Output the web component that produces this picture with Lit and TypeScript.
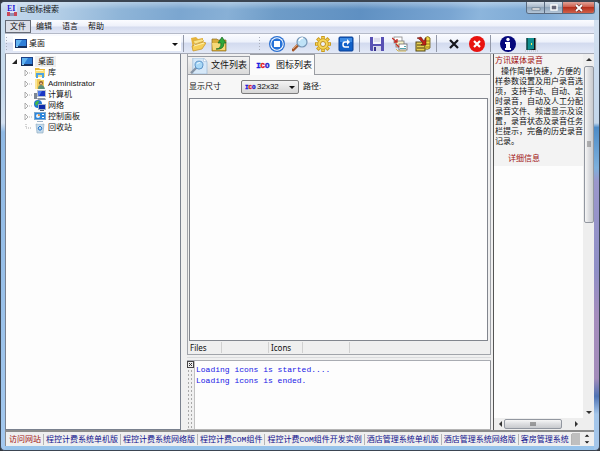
import { LitElement, html, svg, css, TemplateResult } from "lit";
import { customElement, state } from "lit/decorators.js";
import { classMap } from "lit/directives/class-map.js";

const icon = (box: string, cls: string, body: unknown): TemplateResult =>
  html`<svg class=${cls} viewBox=${box} aria-hidden="true">${body}</svg>`;

const desktopArt = svg`
  <rect x="0" y="1" width="12" height="9" fill="#1c3f86"/>
  <rect x="1" y="2" width="10" height="6" fill="#2f7fd8"/>
  <path d="M1 2h6L3 8H1z" fill="#63b4f0"/>
  <rect x="0" y="8" width="12" height="2" fill="#16305e"/>
  <rect x="1" y="8" width="2" height="1" fill="#8fd0f5"/>`;

const treeArt = {
  library: svg`<path d="M1 1h4l1 1h5v3H1z" fill="#e5b73c"/><rect x="1" y="3" width="10" height="7" fill="#f8df7a"/>
    <path d="M2 6h8v5H8V8H4v3H2z" fill="#4ea3e0"/><path d="M2 3h7v1H2z" fill="#fff7cf"/>`,
  user: svg`<path d="M1 1h5l1 1h3v9H1z" fill="#f1cc59"/><path d="M1 1h2v10H1z" fill="#fbe69a"/>
    <circle cx="7" cy="5" r="2" fill="#8a5a2c"/><path d="M4 11q0-4 3-4t4 4z" fill="#5f8f7a"/><circle cx="7" cy="5.500" r="1" fill="#f2c9a0"/>`,
  computer: svg`<rect x="3" y="1" width="9" height="7" fill="#b8c0cc"/><rect x="4" y="2" width="7" height="5" fill="#1a37c4"/>
    <path d="M4 2h4L5 7H4z" fill="#4c78ea"/><rect x="0" y="4" width="3" height="6" fill="#7d8794"/><path d="M3 9h8l1 2H4z" fill="#8d96a3"/>`,
  network: svg`<circle cx="4" cy="4" r="4" fill="#1f74d2"/><path d="M1 3q2-3 4-2l-1 3-2 2z" fill="#43b649"/>
    <rect x="4" y="4" width="8" height="6" fill="#9fb0c6"/><rect x="5" y="5" width="6" height="4" fill="#0d2aaa"/><path d="M6 10h4v1H6z" fill="#53606f"/>`,
  control: svg`<rect x="0" y="1" width="12" height="8" fill="#7fa9cf"/><rect x="1" y="2" width="10" height="6" fill="#2c86dc"/>
    <circle cx="4" cy="5" r="2" fill="#e8f3fb"/><path d="M4 5V3a2 2 0 0 1 2 2z" fill="#e9923a"/><path d="M8 3h2v1H8zM8 6h2v1H8z" fill="#fff"/><path d="M3 10h6v1H3z" fill="#9cb3c7"/>`,
  bin: svg`<path d="M2 2h8L9 11H3z" fill="#c3d9ea" stroke="#8aa7be" stroke-width=".6"/>
    <path d="M2 2l2-1h4l2 1z" fill="#eef5fa"/><path d="M4 6l2-2 2 2-1 2H5z" fill="none" stroke="#2779d0"/>`,
};

const toolArt = {
  open: svg`<path d="M1 2l5-1 2 2 5-1v4L4 8l-1 5z" fill="#e5b33c"/><path d="M3 5l9-2 2 2-9 3z" fill="#fbe48a" stroke="#cf9f2c" stroke-width=".5"/>
    <path d="M2 10l11-4 3 1-4 6-9 2z" fill="#f6cf57" stroke="#c48f20" stroke-width=".7"/><path d="M4 10l10-3" stroke="#fff1b0"/>`,
  up: svg`<path d="M1 3h5l1 1h8v11H1z" fill="#d9ae3b" stroke="#8d6d1c" stroke-width=".7"/><path d="M1 7h13v7H2z" fill="#f5d978"/>
    <path d="M5 13q5 0 5-6H7l4-6 4 6h-2q0 7-8 6z" fill="#2fa83a" stroke="#17651f" stroke-width=".7"/>`,
  stop: svg`<circle cx="8" cy="8" r="8" fill="#2a6fd0"/><circle cx="8" cy="8" r="6.700" fill="#fff"/><circle cx="8" cy="8" r="5.700" fill="#2672d8"/>
    <rect x="5" y="5" width="6" height="6" fill="#fff"/>`,
  find: svg`<path d="M6 9L1 14" stroke="#a4562a" stroke-width="3" stroke-linecap="round"/><path d="M5 9l-4 4" stroke="#e3a06a"/>
    <circle cx="10" cy="6" r="5" fill="#bfe2f7" stroke="#7596b6" stroke-width="1.200"/><path d="M7 5q1-3 4-3" stroke="#fff" stroke-width="1.500" fill="none"/>`,
  gear: svg`<g stroke="#c99a1c" stroke-width="3.600"><path d="M8 0v16M0 8h16M2.300 2.300l11.400 11.400M13.700 2.300L2.300 13.700"/></g>
    <g stroke="#f3cf4e" stroke-width="2.200"><path d="M8 1v14M1 8h14M3 3l10 10M13 3L3 13"/></g>
    <circle cx="8" cy="8" r="5.300" fill="#f5d65a" stroke="#d0a126"/><circle cx="8" cy="8" r="2.500" fill="#eef1fb" stroke="#c0901c"/>`,
  redo: svg`<rect x="1" y="1" width="14" height="14" rx="1" fill="#1161c9" stroke="#0a3f92"/><path d="M2 2h12v4H2z" fill="#3b8ae4"/>
    <path d="M11 11H7q-2 0-2-2.500T7 6h2" fill="none" stroke="#fff" stroke-width="1.500"/><path d="M9 3l3 3-3 3z" fill="#fff"/>`,
  save: svg`<path d="M1 1h14v14H2l-1-1z" fill="#5750b4"/><rect x="4" y="1" width="8" height="7" fill="#f3f3fb"/><path d="M5 3h6M5 5h6" stroke="#c5c5dd"/>
    <rect x="4" y="10" width="8" height="5" fill="#d5d6ea"/><rect x="5" y="11" width="2" height="4" fill="#38338c"/>`,
  copy: svg`<rect x="2" y="1" width="8" height="6" fill="#fff" stroke="#888" stroke-width=".8"/><rect x="4" y="5" width="8" height="6" fill="#f8f3c8" stroke="#777" stroke-width=".8"/>
    <rect x="7" y="8" width="8" height="6" fill="#fff" stroke="#666" stroke-width=".8"/><path d="M8 12h6v1H8zM12 10h2v1h-2z" fill="#55a4ae"/><path d="M0 2l5 4M5 3v3H2M4 8l3 3" fill="none" stroke="#c62a22" stroke-width="1.300"/>
    <path d="M4 13l2 2h8" stroke="#d0b451" fill="none"/>`,
  batch: svg`<rect x="1" y="6" width="9" height="9" fill="#e6cf52" stroke="#534714"/><path d="M2 9h7M2 12h7" stroke="#4a3f12"/>
    <path d="M10 2q3-3 5 0v10q-2 2-5 1z" fill="#f2d943" stroke="#6d5c14" stroke-width=".8"/><path d="M11 5h4M11 8h4M11 11h4" stroke="#907c1c"/>
    <path d="M2 2l4-1 3 4 2-3v7H6l2-2-4-4z" fill="#bf2219" stroke="#551008" stroke-width=".5"/>`,
  cross: svg`<path d="M4 4l8 8M12 4l-8 8" stroke="#15151c" stroke-width="2.200"/>`,
  abort: svg`<circle cx="8" cy="8" r="8" fill="#e8120f"/><path d="M5 5l6 6M11 5l-6 6" stroke="#fff" stroke-width="2.200"/>`,
  info: svg`<circle cx="8" cy="8" r="8" fill="#05087c"/><circle cx="8" cy="3.500" r="1.700" fill="#fff"/><path d="M5 6h5v6h1v2H5v-2h1V8H5z" fill="#fff"/>`,
  door: svg`<path d="M2 15h14" stroke="#b9b9b9" stroke-dasharray="1 1"/><rect x="4" y="2" width="9" height="12" fill="#111"/><path d="M4 2l7 0v11l-7 1z" fill="#129090"/>
    <path d="M4 2v12" stroke="#073f3f" stroke-width="1.500"/><rect x="8" y="7" width="1" height="2" fill="#f4ea58"/><path d="M13 2v12" stroke="#ccc"/>`,
};

const icoArt = svg`<text x="0" y="9" font-family="Liberation Mono, monospace" font-weight="bold" font-size="8"
  stroke-width=".5"><tspan fill="#1a1adf" stroke="#1a1adf">I</tspan><tspan fill="#e01818" stroke="#e01818">C</tspan><tspan fill="#2222c8" stroke="#2222c8">O</tspan></text>`;

const pageArt = svg`<path d="M3 0h12l4 4v14H3z" fill="#d6e8f8" stroke="#9bb8d6" stroke-width=".8"/><path d="M15 0v4h4z" fill="#fff" stroke="#9bb8d6" stroke-width=".6"/>
  <path d="M7 11l-6 6" stroke="#8593a5" stroke-width="2.500"/><circle cx="10" cy="8" r="4.500" fill="#a9d8f6" stroke="#4f88c0"/><path d="M8 7q1-2 3-2" stroke="#fff" fill="none"/>`;

const tri = {
  down: svg`<path d="M1 3h6L4 6z" fill="currentColor"/>`,
  up: svg`<path d="M1 5h6L4 2z" fill="currentColor"/>`,
  left: svg`<path d="M6 1v6L3 4z" fill="currentColor"/>`,
  right: svg`<path d="M2 1v6l3-3z" fill="currentColor"/>`,
};

type Tool = [keyof typeof toolArt, string];
const TOOL_GROUPS: { cls: string; tools: Tool[] }[] = [
  { cls: "first", tools: [["open", "打开"], ["up", "向上"]] },
  { cls: "actions", tools: [["stop", "停止"], ["find", "搜索"], ["gear", "设置"], ["redo", "刷新"]] },
  { cls: "", tools: [["save", "保存"], ["copy", "复制"], ["batch", "批量"]] },
  { cls: "", tools: [["cross", "删除"], ["abort", "取消"]] },
  { cls: "", tools: [["info", "关于"], ["door", "退出"]] },
];

const TREE: [keyof typeof treeArt, string][] = [
  ["library", "库"],
  ["user", "Administrator"],
  ["computer", "计算机"],
  ["network", "网络"],
  ["control", "控制面板"],
  ["bin", "回收站"],
];

const INTRO = [
  "操作简单快捷，方便的",
  "样参数设置及用户录音选",
  "项，支持手动、自动、定",
  "时录音，自动及人工分配",
  "录音文件、频谱显示及设",
  "置，录音状态及录音任务",
  "栏提示，完备的历史录音",
  "记录。",
];

const LINKS = [
  "访问网站",
  "程控计费系统单机版",
  "程控计费系统网络版",
  "程控计费COM组件",
  "程控计费COM组件开发实例",
  "酒店管理系统单机版",
  "酒店管理系统网络版",
  "客房管理系统",
];

@customElement("app-root")
export class AppRoot extends LitElement {
  @state() private tab = 1;

  static styles = css`
    :host {
      display: block;
      height: 100vh;
      font: 8px/11px "Liberation Sans", "Noto Sans CJK SC", sans-serif;
      color: #111;
      background: #33383f;
    }
    * { box-sizing: border-box; }
    svg { display: block; flex: none; }
    button, select { font: inherit; color: inherit; margin: 0; padding: 0; border: 0; background: none; border-radius: 0; }
    h1, h2, p, ul { margin: 0; padding: 0; font: inherit; list-style: none; }
    .window {
      height: 100%;
      display: flex;
      flex-direction: column;
      padding: 0 5px 4px 4px;
      border: 1px solid #3b4552;
      border-top-width: 2px;
      border-radius: 5px;
      background:
        linear-gradient(#d5e2f1, #c3d6ea 27%, #4d8cc8 28%, #7db0dc 37%, #9b97cc 40%, #8f8fc6 60%, #a58dbd 70%, #a38cba 84%, #4f73b4 88%, #a4c6ea 92%) right / 5px 100% no-repeat,
        linear-gradient(#c9dcee 20%, #d5e2f2 27%, #8fb9e4 29%, #a3c8ee) left / 4px 100% no-repeat,
        #98c3ea;
    }
    .titlebar {
      flex: none;
      height: 18px;
      display: flex;
      align-items: flex-start;
      margin: 0 -5px 0 -4px;
      padding: 0 4px 0 6px;
      border-radius: 4px 4px 0 0;
      background:
        linear-gradient(#fff5, #fff0 40%),
        linear-gradient(100deg, #c4d8ec, #b2cde6 10%, #8fb5d8 20%, #7ba6d0 30%, #88b0d6 38%, #6e9cc8 46%, #5f90c2 60%, #79a5d2 75%, #8cb5dc 80%, #7ba8d4 90%, #a9c6e2);
    }
    .titlebar h1 { flex: 1; line-height: 16px; margin-left: 3px; }
    .app-icon { width: 10px; height: 12px; margin-top: 2px; }
    .caption { display: flex; height: 12px; border: 1px solid #5a6b80; border-top: 0; border-radius: 0 0 3px 3px; overflow: hidden; }
    .caption button { width: 18px; display: grid; place-items: center; background: linear-gradient(#d5dfea, #a8b8c9 45%, #8fa5bb 50%, #b4c6d8); border-right: 1px solid #5a6b80; }
    .caption button.close { width: 31px; border: 0; background: linear-gradient(#e0a398, #cf5c4a 45%, #b5301d 50%, #d0614a); }
    .caption svg { width: 10px; height: 8px; }
    .menubar { flex: none; height: 13px; display: flex; background: linear-gradient(#fbfcff, #eef1fa 45%, #d5dcef 55%, #e2e7f5); }
    .menubar button { padding: 0 4px; border: 1px solid transparent; }
    .menubar button.on { border-color: #666b76; background: #dcdfe8; }
    .toolbar {
      flex: none;
      height: 21px;
      display: flex;
      align-items: center;
      border-top: 1px solid #b5bac8;
      border-bottom: 1px solid #a5a9b5;
      background: linear-gradient(#fbfcff, #eef2fb 40%, #d3dbef 50%, #e3e9f7);
    }
    .dots { width: 3px; height: 15px; flex: none; background: radial-gradient(circle, #a8adba 1px, transparent 1px) 0 0 / 3px 3px; }
    .combo { display: grid; align-items: center; background: #fff; }
    .combo > * { grid-area: 1 / 1; }
    .combo select { appearance: none; width: 100%; height: 100%; outline: 0; }
    .combo svg { pointer-events: none; }
    .combo .caret { justify-self: end; width: 8px; height: 8px; margin-right: 2px; }
    .places { flex: none; width: calc(30% - 9px); height: 15px; margin: 0 2px 0 5px; }
    .places select { padding-left: 16px; }
    .places .desk { margin-left: 2px; }
    .desk, .node { width: 12px; height: 12px; }
    .group { display: flex; align-items: center; gap: 7px; height: 17px; padding: 0 5px 0 9px; border-left: 1px solid #9298a8; }
    .group.first { gap: 5px; padding: 0 31px 0 6px; }
    .group.actions { border-left: 0; padding: 0 5px 0 8px; }
    .tool, .tool svg { width: 16px; height: 16px; flex: none; }
    .body { flex: 1; min-height: 0; display: grid; grid-template-columns: 176fr 310fr 103fr; background: #f0f0f0; }
    .tree { border: 1px solid #7a818e; border-top: 0; background: #fdfdfd; padding: 2px 0 0 5px; }
    .tree .row { display: flex; align-items: center; height: 11px; gap: 2px; }
    .tree .root span { background: #efefef; padding: 0 2px 0 3px; }
    .tree ul { padding-left: 13px; }
    .arrow { width: 8px; height: 8px; }
    .center { display: grid; grid-template-rows: 1fr 6px 69px; min-width: 0; padding-left: 6px; }
    .panel { display: flex; flex-direction: column; min-height: 0; border-left: 1px solid #a1a4aa; border-right: 1px solid #a1a4aa; }
    .tabs { flex: none; display: flex; align-items: flex-end; height: 21px; border-bottom: 1px solid #9a9da3; font-size: 9px; }
    .tabs button { height: 18px; display: flex; align-items: center; gap: 3px; padding: 0 2px; border: 1px solid #9a9da3; border-left: 0; border-bottom: 0; background: linear-gradient(#f3f3f3, #dadada); }
    .tabs button svg { width: 18px; height: 16px; }
    .tabs button.on { height: 21px; margin-bottom: -1px; padding: 0 2px 0 6px; background: #fbfbfb; gap: 6px; }
    .tabs button .ico { width: 14px; height: 11px; }
    .filter { flex: none; height: 23px; display: flex; align-items: center; gap: 4px; padding-left: 1px; background: #f7f7f7; }
    .filter label { width: 48px; }
    .size { width: 58px; height: 14px; border: 1px solid #7d7d7d; border-radius: 2px; background: linear-gradient(#f4f4f4, #d6d6d6); }
    .size select { padding-left: 15px; }
    .size .ico { width: 11px; height: 9px; margin-left: 3px; }
    .list { flex: 1; margin: 0 2px 0 1px; border: 1px solid #82868e; background: #fdfdfd; }
    .status { flex: none; height: 14px; display: flex; align-items: center; background: #efefef; border-bottom: 1px solid #a1a4aa; font-family: "Noto Sans", "Noto Sans CJK SC", sans-serif; }
    .status span { height: 11px; border-right: 1px solid #d0d0d0; padding-left: 2px; }
    .status .wide { width: 47px; }
    .status .narrow { width: 34px; }
    .split { border-bottom: 1px solid #a9acb2; background: linear-gradient(#f0f0f0 40%, #c4c6ca 40%, #f0f0f0 60%); }
    .log { display: flex; background: #fdfdfd; border-bottom: 1px solid #b5b5b5; border-right: 1px solid #8d9096; }
    .grip { flex: none; width: 8px; border-right: 1px solid #c1c1c1; background: radial-gradient(circle, #a9a9a9 1px, transparent 1px) 0 0 / 3px 4px, #f0f0f0; }
    .grip svg { width: 7px; height: 7px; }
    .lines { padding: 3px 1px; color: #1717e6; font-family: "Liberation Mono", "Noto Sans CJK SC", monospace; }
    .side { display: grid; grid-template-columns: minmax(0, 1fr) 11px; grid-template-rows: 1fr 12px; min-width: 0; min-height: 0; margin-left: 2px; border-left: 1px solid #555; }
    .doc { overflow: hidden; white-space: nowrap; background: #fdfdfd; }
    .promo { background: #f3f3f3; padding: 2px 0 2px 1px; line-height: 10px; }
    .promo h2 { color: #a11212; padding-bottom: 1px; }
    .promo p:first-of-type { text-indent: 6px; }
    .promo a { display: block; margin-top: 7px; padding-left: 13px; color: #a11212; text-decoration: none; }
    .vbar, .hbar { display: flex; align-items: center; background: #eee; color: #333; }
    .vbar { flex-direction: column; }
    .hbar { padding: 0 2px; }
    .vbar svg, .hbar svg { width: 8px; height: 8px; }
    .vbar > svg { margin: 2px 0; }
    .thumb { border: 1px solid #9297a0; border-radius: 2px; display: grid; place-items: center; }
    .vbar .thumb { width: 10px; height: 43%; background: linear-gradient(90deg, #f6f6f6, #dcdde0 50%, #c8cace); }
    .hbar .thumb { width: 58px; height: 10px; background: linear-gradient(#f6f6f6, #dcdde0 50%, #c8cace); }
    .fill { flex: 1; }
    .links { flex: none; height: 16px; display: flex; align-items: center; border-top: 2px solid #8c8c8c; border-left: 1px solid #8c8c8c; background: #efefef; padding-left: 1px; font-family: "Liberation Mono", "Noto Sans CJK SC", monospace; white-space: nowrap; }
    .links a { color: #10108c; text-decoration: none; padding: 0 2px; border-right: 1px solid #b5b5b5; }
    .links a:first-child { color: #a11212; }
    .links .fill { height: 12px; background: #bfbfbf; }
    .spin { width: 14px; display: grid; justify-items: center; }
    .spin button { height: 6px; display: grid; place-items: center; }
    .spin svg { width: 6px; height: 6px; }
  `;

  render() {
    return html`
      <div class="window">
        <header class="titlebar">
          ${icon("0 0 10 12", "app-icon", svg`<rect width="10" height="12" fill="#d9e2f6"/>
            <text x="0" y="7" font-family="Liberation Serif, serif" font-weight="bold" font-size="8" fill="#1a1ad0">EI</text>
            <path d="M0 8h3v1h4V8h3v4H0z" fill="#c8495a"/><path d="M3 9h4v3H3z" fill="#8f8fb5"/>`)}
          <h1>Ei图标搜索</h1>
          <div class="caption">
            <button aria-label="最小化">${icon("0 0 10 8", "", svg`<rect x="1" y="4" width="8" height="2" fill="#fff" stroke="#56616f" stroke-width=".6"/>`)}</button>
            <button aria-label="最大化">${icon("0 0 10 8", "", svg`<rect x="2" y="1" width="6" height="5" fill="#667" stroke="#fff" stroke-width="1.400"/>`)}</button>
            <button class="close" aria-label="关闭">${icon("0 0 10 8", "", svg`<path d="M2 1l6 6M8 1L2 7" stroke="#5d2a28" stroke-width="3"/><path d="M2 1l6 6M8 1L2 7" stroke="#fff" stroke-width="1.800"/>`)}</button>
          </div>
        </header>

        <nav class="menubar">
          ${["文件", "编辑", "语言", "帮助"].map((m, i) => html`<button class=${classMap({ on: i === 0 })}>${m}</button>`)}
        </nav>

        <div class="toolbar">
          <span class="dots"></span>
          <div class="combo places">
            <select aria-label="位置"><option>桌面</option></select>
            ${icon("0 0 12 12", "desk", desktopArt)}${icon("0 0 8 8", "caret", tri.down)}
          </div>
          ${TOOL_GROUPS.map((g) => html`
            ${g.cls === "actions" ? html`<span class="dots"></span>` : ""}
            <div class="group ${g.cls}">
              ${g.tools.map(([k, label]) => html`<button class="tool" aria-label=${label}>${icon("0 0 16 16", "", toolArt[k])}</button>`)}
            </div>`)}
        </div>

        <main class="body">
          <ul class="tree">
            <li>
              <div class="row root">${icon("0 0 8 8", "arrow", svg`<path d="M6 1v5H1z" fill="#222"/>`)}${icon("0 0 12 12", "desk", desktopArt)}<span>桌面</span></div>
              <ul>
                ${TREE.map(([k, label]) => html`<li class="row">
                  ${icon("0 0 8 8", "arrow", k === "bin"
                    ? svg`<path d="M2 0v4h6" fill="none" stroke="#aaa" stroke-dasharray="1 1"/>`
                    : svg`<path d="M1 1l3 3-3 3z" fill="#fff" stroke="#999" stroke-width=".8"/><path d="M5 4h3" stroke="#bbb" stroke-dasharray="1 1"/>`)}
                  ${icon("0 0 12 12", "node", treeArt[k])}<span>${label}</span>
                </li>`)}
              </ul>
            </li>
          </ul>

          <section class="center">
            <div class="panel">
              <div class="tabs" role="tablist">
                <button role="tab" class=${classMap({ on: this.tab === 0 })} @click=${() => (this.tab = 0)}>${icon("0 0 20 18", "", pageArt)}文件列表</button>
                <button role="tab" class=${classMap({ on: this.tab === 1 })} @click=${() => (this.tab = 1)}>${icon("0 0 15 12", "ico", icoArt)}图标列表</button>
              </div>
              <div class="filter">
                <label for="size">显示尺寸</label>
                <div class="combo size">
                  <select id="size"><option>32x32</option></select>
                  ${icon("0 0 15 12", "ico", icoArt)}${icon("0 0 8 8", "caret", tri.down)}
                </div>
                <span>路径:</span>
              </div>
              <div class="list"></div>
              <div class="status">
                <span class="narrow">Files</span><span class="wide"></span><span class="narrow">Icons</span><span class="wide"></span>
              </div>
            </div>
            <div class="split"></div>
            <div class="log">
              <div class="grip">${icon("0 0 7 7", "", svg`<rect x=".5" y=".5" width="6" height="6" fill="#eee" stroke="#444"/><path d="M2 2l3 3M5 2L2 5" stroke="#333"/>`)}</div>
              <div class="lines" role="log"><p>Loading icons is started....</p><p>Loading icons is ended.</p></div>
            </div>
          </section>

          <aside class="side">
            <div class="doc">
              <div class="promo">
                <h2>方讯媒体录音</h2>
                ${INTRO.map((l) => html`<p>${l}</p>`)}
                <a href="#detail">详细信息</a>
              </div>
            </div>
            <div class="vbar">
              ${icon("0 0 8 8", "", tri.up)}
              <div class="thumb">${icon("0 0 8 8", "", svg`<path d="M2 2h4M2 4h4M2 6h4" stroke="#777"/>`)}</div>
              <span class="fill"></span>${icon("0 0 8 8", "", tri.down)}
            </div>
            <div class="hbar">
              ${icon("0 0 8 8", "", tri.left)}
              <div class="thumb">${icon("0 0 8 8", "", svg`<path d="M2 2v4M4 2v4M6 2v4" stroke="#555"/>`)}</div>
              <span class="fill"></span>${icon("0 0 8 8", "", tri.right)}
            </div>
            <div class="vbar"></div>
          </aside>
        </main>

        <footer class="links">
          ${LINKS.map((l) => html`<a href="#link">${l}</a>`)}
          <span class="fill"></span>
          <div class="spin">
            <button aria-label="上一个">${icon("0 0 8 8", "", tri.up)}</button>
            <button aria-label="下一个">${icon("0 0 8 8", "", tri.down)}</button>
          </div>
        </footer>
      </div>
    `;
  }
}
